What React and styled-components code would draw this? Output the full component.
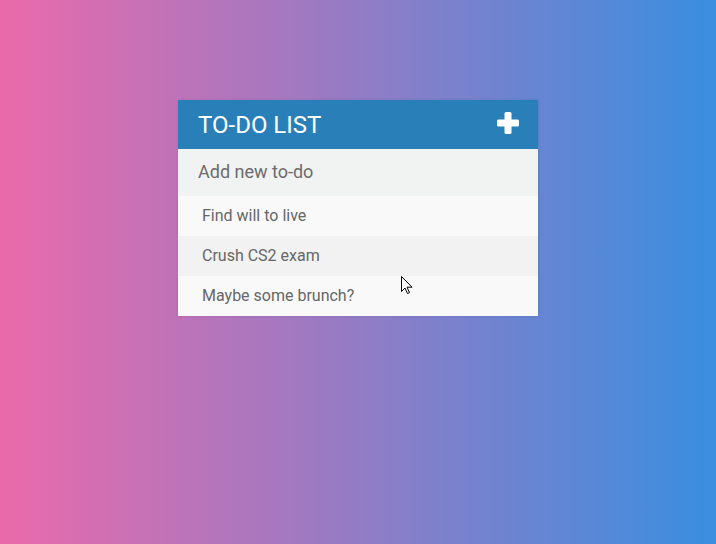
import React from 'react';
import styled, { createGlobalStyle } from 'styled-components';

const GlobalStyle = createGlobalStyle`
  html, body {
    margin: 0;
    height: 100%;
  }
  body {
    font-family: Roboto, "Liberation Sans", sans-serif;
    background: linear-gradient(to right, #ea6aab, #3a8ee0);
  }
`;

const todos = ['Find will to live', 'Crush CS2 exam', 'Maybe some brunch?'];

const App = () => {
  return (
    <>
      <GlobalStyle />
      <Page>
        <Container>
          <Header>
            <Title>TO-DO LIST</Title>
            <PlusIcon viewBox="0 0 22 22">
              <path
                d="M7.5 1.5 Q7.5 0 9 0 H13 Q14.5 0 14.5 1.5 V7.5 H20.5 Q22 7.5 22 9 V13 Q22 14.5 20.5 14.5 H14.5 V20.5 Q14.5 22 13 22 H9 Q7.5 22 7.5 20.5 V14.5 H1.5 Q0 14.5 0 13 V9 Q0 7.5 1.5 7.5 H7.5 Z"
                fill="#fff"
              />
            </PlusIcon>
          </Header>
          <NewTodo placeholder="Add new to-do" />
          <List>
            {todos.map((t, i) => (
              <Item key={t} $odd={i % 2 === 1}>
                {t}
              </Item>
            ))}
          </List>
          <Cursor viewBox="0 0 12 19">
            <path d="M0.5 0.5 V15.5 L4 12 L6.5 17.5 L8.5 16.6 L6 11.2 H11 Z" fill="#fff" stroke="#000" strokeWidth="1" />
          </Cursor>
        </Container>
      </Page>
    </>
  );
};

export default App;

const Page = styled.div`
  min-height: 544px;
  padding-top: 100px;
  box-sizing: border-box;
`;

const Container = styled.div`
  position: relative;
  width: 360px;
  margin: 0 0 0 178px;
  box-shadow: 0 0 3px rgba(0, 0, 0, 0.1);
`;

const Header = styled.div`
  height: 49px;
  background: #2980b9;
  display: flex;
  align-items: center;
  justify-content: space-between;
  padding: 0 19px 0 20px;
`;

const Title = styled.h1`
  margin: 0;
  color: #fff;
  font-size: 24px;
  font-weight: 400;
  text-transform: uppercase;
`;

const PlusIcon = styled.svg`
  width: 22px;
  height: 22px;
  margin-top: -3px;
`;

const NewTodo = styled.input`
  display: block;
  width: 100%;
  box-sizing: border-box;
  height: 47px;
  border: none;
  outline: none;
  background: #f1f2f2;
  padding: 0 20px 2px;
  font-family: Roboto, "Liberation Sans", sans-serif;
  font-size: 18px;
  color: #666;

  &::placeholder {
    color: #6c6c6c;
  }
`;

const List = styled.ul`
  list-style: none;
  margin: 0;
  padding: 0;
`;

const Item = styled.li`
  height: 40px;
  line-height: 40px;
  padding-left: 24px;
  font-size: 16px;
  color: #666;
  background: ${(p) => (p.$odd ? '#f2f2f2' : '#f9f9fa')};
`;

const Cursor = styled.svg`
  position: absolute;
  left: 223px;
  top: 176px;
  width: 12px;
  height: 19px;
`;
